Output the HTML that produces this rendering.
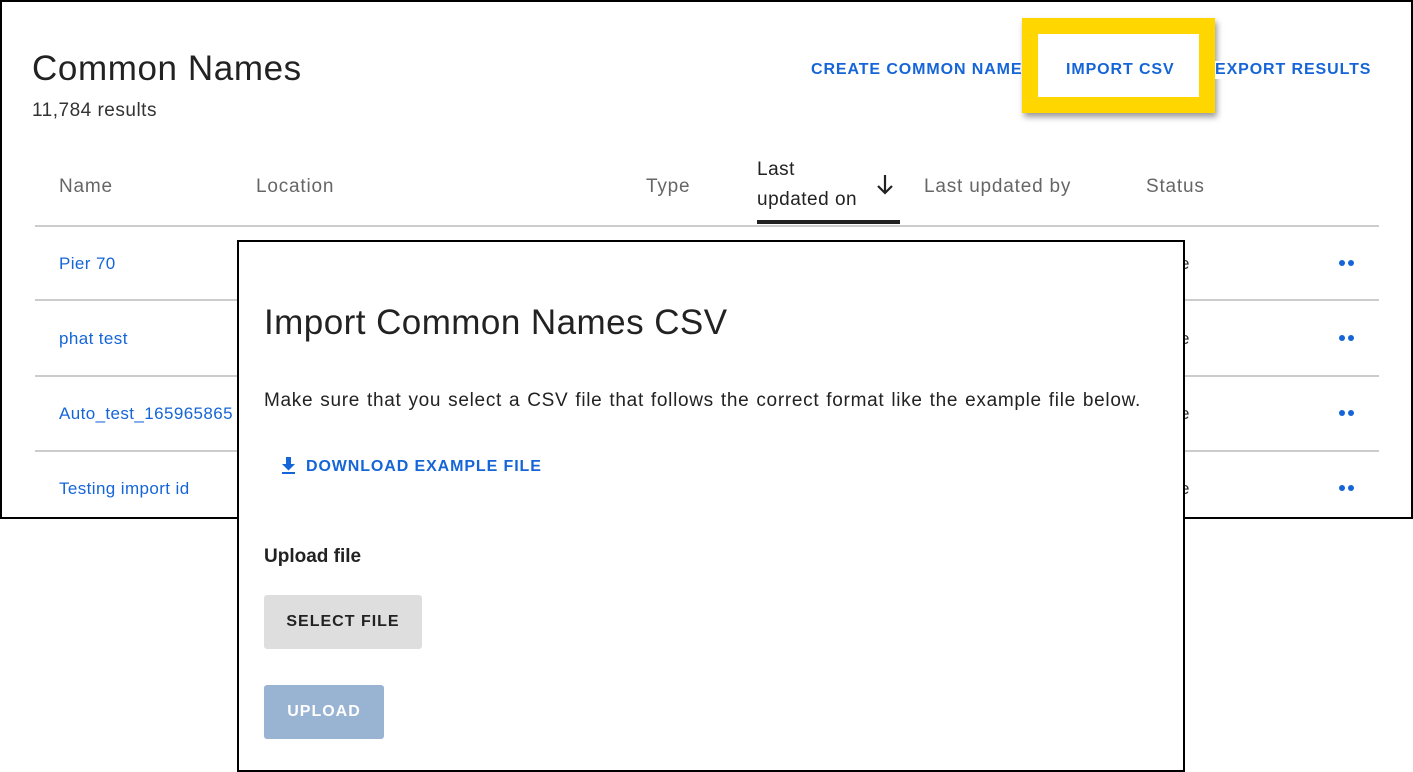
<!DOCTYPE html>
<html><head><style>
*{margin:0;padding:0;box-sizing:border-box}
body{width:1413px;height:772px;background:#fff;position:relative;overflow:hidden;font-family:"Liberation Sans",Arial,sans-serif;color:#222}
.a{position:absolute;white-space:nowrap}
.panel{position:absolute;left:0;top:0;width:1413px;height:519px;border:2px solid #000;background:#fff}
.hd{color:#666;font-size:19px;letter-spacing:0.8px}
.line{position:absolute;left:35px;width:1344px;height:2px;background:#ccc}
.link{color:#1565d8;font-size:17px;letter-spacing:0.4px}
.dot{position:absolute;width:6px;height:6px;border-radius:50%;background:#1565d8}
.btn{font-size:16px;font-weight:bold;letter-spacing:0.9px;color:#1565d8}
</style></head><body>
<div class="panel"></div>
<div class="a" style="left:32px;top:49px;font-size:35px;color:#222;letter-spacing:0.6px">Common Names</div>
<div class="a" style="left:32px;top:100px;font-size:19px;color:#333;letter-spacing:0.5px">11,784 results</div>
<div class="a btn" style="left:811px;top:61px">CREATE COMMON NAME</div>
<div class="a" style="left:1022px;top:18px;width:193px;height:95px;border:16px solid #ffd600;background:#fff;box-shadow:2px 4px 6px rgba(0,0,0,.4)"></div>
<div class="a btn" style="left:1066px;top:61px">IMPORT CSV</div>
<div class="a btn" style="left:1215px;top:61px;background:#fff">EXPORT RESULTS</div>
<div class="a hd" style="left:59px;top:176px">Name</div>
<div class="a hd" style="left:256px;top:176px">Location</div>
<div class="a hd" style="left:646px;top:176px">Type</div>
<div class="a" style="left:757px;top:155px;font-size:19px;line-height:30px;color:#222;letter-spacing:0.5px">Last<br>updated on</div>
<svg class="a" style="left:876px;top:174px" width="18" height="22" viewBox="0 0 18 22"><path d="M9 1v18M2 12l7 7 7-7" stroke="#222" stroke-width="2.2" fill="none"/></svg>
<div class="a" style="left:757px;top:220px;width:143px;height:4px;background:#222"></div>
<div class="a hd" style="left:924px;top:176px">Last updated by</div>
<div class="a hd" style="left:1146px;top:176px">Status</div>
<div class="line" style="top:225px"></div>
<div class="line" style="top:299px"></div>
<div class="line" style="top:375px"></div>
<div class="line" style="top:450px"></div>
<div class="a link" style="left:59px;top:254px">Pier 70</div>
<div class="a link" style="left:59px;top:329px">phat test</div>
<div class="a link" style="left:59px;top:404px">Auto_test_165965865</div>
<div class="a link" style="left:59px;top:479px">Testing import id</div>
<div class="a" style="left:1180px;top:254px;font-size:17px;color:#333">e</div>
<div class="a" style="left:1180px;top:329px;font-size:17px;color:#333">e</div>
<div class="a" style="left:1180px;top:404px;font-size:17px;color:#333">e</div>
<div class="a" style="left:1180px;top:479px;font-size:17px;color:#333">e</div>
<div class="dot" style="left:1339px;top:260px"></div><div class="dot" style="left:1348px;top:260px"></div>
<div class="dot" style="left:1339px;top:335px"></div><div class="dot" style="left:1348px;top:335px"></div>
<div class="dot" style="left:1339px;top:410px"></div><div class="dot" style="left:1348px;top:410px"></div>
<div class="dot" style="left:1339px;top:485px"></div><div class="dot" style="left:1348px;top:485px"></div>

<div class="a" style="left:237px;top:240px;width:948px;height:532px;border:2px solid #000;background:#fff"></div>
<div class="a" style="left:264px;top:303px;font-size:35px;color:#222;letter-spacing:0.45px">Import Common Names CSV</div>
<div class="a" style="left:264px;top:390px;font-size:19px;color:#222;letter-spacing:0.7px;word-spacing:1px">Make sure that you select a CSV file that follows the correct format like the example file below.</div>
<svg class="a" style="left:280px;top:457px" width="17" height="18" viewBox="0 0 17 18"><path d="M6 0h5v7h4l-6.5 6.5L2 7h4z M2 15h13v2H2z" fill="#1565d8"/></svg>
<div class="a btn" style="left:306px;top:458px">DOWNLOAD EXAMPLE FILE</div>
<div class="a" style="left:264px;top:546px;font-size:19px;font-weight:bold;color:#222">Upload file</div>
<div class="a" style="left:264px;top:595px;width:158px;height:54px;background:#dedede;border-radius:3px;font-size:16px;font-weight:bold;letter-spacing:1px;color:#222;text-align:center;line-height:54px">SELECT FILE</div>
<div class="a" style="left:264px;top:685px;width:120px;height:54px;background:#99b3d3;border-radius:3px;font-size:16px;font-weight:bold;letter-spacing:1px;color:#fff;text-align:center;line-height:54px">UPLOAD</div>
</body></html>
